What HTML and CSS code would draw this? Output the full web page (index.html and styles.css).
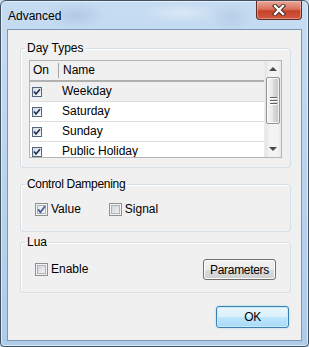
FILE: index.html
```html
<!DOCTYPE html>
<html lang="en">
<head>
    <meta charset="UTF-8">
    <title>Advanced</title>
    <link rel="stylesheet" href="styles.css">
</head>
<body>
    <div class="window">
        <div class="titlebar">
            <span class="title">Advanced</span>
            <button class="close" title="Close">
                <svg width="14" height="12" viewBox="0 0 14 12">
                    <path d="M3 2 L11 10 M11 2 L3 10" stroke="#3a2420" stroke-width="4.2" stroke-linecap="square"/>
                    <path d="M3 2 L11 10 M11 2 L3 10" stroke="#fff" stroke-width="2.4" stroke-linecap="square"/>
                </svg>
            </button>
        </div>

        <div class="client">
            <fieldset class="group group-days">
                <legend>Day Types</legend>
                <div class="group-body">
                    <div class="list">
                        <div class="grid">
                            <div class="grid-head">
                                <div class="col-on">On</div>
                                <div class="col-name">Name</div>
                            </div>
                            <div class="row current">
                                <span class="cell-on"><span class="tick"><svg width="8" height="8" viewBox="0 0 8 8"><path d="M1 3.5 L3 6 L7 1.2" fill="none" stroke="#1d3050" stroke-width="1.6"/></svg></span></span>
                                <span class="cell-name">Weekday</span>
                            </div>
                            <div class="row">
                                <span class="cell-on"><span class="tick"><svg width="8" height="8" viewBox="0 0 8 8"><path d="M1 3.5 L3 6 L7 1.2" fill="none" stroke="#1d3050" stroke-width="1.6"/></svg></span></span>
                                <span class="cell-name">Saturday</span>
                            </div>
                            <div class="row">
                                <span class="cell-on"><span class="tick"><svg width="8" height="8" viewBox="0 0 8 8"><path d="M1 3.5 L3 6 L7 1.2" fill="none" stroke="#1d3050" stroke-width="1.6"/></svg></span></span>
                                <span class="cell-name">Sunday</span>
                            </div>
                            <div class="row">
                                <span class="cell-on"><span class="tick"><svg width="8" height="8" viewBox="0 0 8 8"><path d="M1 3.5 L3 6 L7 1.2" fill="none" stroke="#1d3050" stroke-width="1.6"/></svg></span></span>
                                <span class="cell-name">Public Holiday</span>
                            </div>
                        </div>
                        <div class="vscroll">
                            <div class="sb-btn"><span class="arrow-up"></span></div>
                            <div class="sb-track">
                                <div class="sb-thumb">
                                    <span class="grip"></span>
                                    <span class="grip"></span>
                                    <span class="grip"></span>
                                </div>
                            </div>
                            <div class="sb-btn"><span class="arrow-down"></span></div>
                        </div>
                    </div>
                </div>
            </fieldset>

            <fieldset class="group group-damp">
                <legend>Control Dampening</legend>
                <div class="group-body check-row">
                    <label class="check">
                        <span class="cb checked"><svg width="11" height="11" viewBox="0 0 11 11"><path d="M2.2 5.4 L4.4 8.2 L9 2.2" fill="none" stroke="#4a5c9c" stroke-width="1.8"/></svg></span>
                        Value
                    </label>
                    <label class="check">
                        <span class="cb"></span>
                        Signal
                    </label>
                </div>
            </fieldset>

            <fieldset class="group group-lua">
                <legend>Lua</legend>
                <div class="group-body lua-row">
                    <label class="check">
                        <span class="cb"></span>
                        Enable
                    </label>
                    <button class="btn">Parameters</button>
                </div>
            </fieldset>

            <div class="actions">
                <button class="btn btn-default">OK</button>
            </div>
        </div>
    </div>
</body>
</html>
```

FILE: styles.css
```css
* {
    margin: 0;
    padding: 0;
    box-sizing: border-box;
}

body {
    font-family: "Liberation Sans", Arial, sans-serif;
    font-size: 12px;
    color: #000;
    background: #c8dcf0;
}

.window {
    display: flex;
    flex-direction: column;
    width: 309px;
    height: 347px;
    padding: 0 6px 5px 6px;
    border: 1px solid #43525f;
    border-radius: 6px 6px 4px 4px;
    background:
        radial-gradient(ellipse 30px 14px at 75px 14px, rgba(120, 150, 185, .25), transparent),
        radial-gradient(ellipse 40px 10px at 180px 12px, rgba(255, 255, 255, .35), transparent),
        radial-gradient(ellipse 22px 16px at 230px 16px, rgba(130, 160, 190, .2), transparent),
        linear-gradient(#c6dcf2, #b8d2ec 60%, #aecbea);
    box-shadow: inset 0 0 0 1px rgba(255, 255, 255, .55);
}

/* title bar */

.titlebar {
    display: flex;
    justify-content: space-between;
    align-items: flex-start;
    height: 28px;
    margin: 0 -6px;
    padding: 0 6px 0 7px;
}

.title {
    padding-top: 8px;
    line-height: 14px;
}

.close {
    display: flex;
    align-items: center;
    justify-content: center;
    width: 46px;
    height: 19px;
    border: 1px solid #5e2c24;
    border-top: 0;
    border-radius: 0 0 4px 4px;
    background: linear-gradient(#e9a899, #d9735f 45%, #c7432b 55%, #d2583e);
    box-shadow: inset 0 0 0 1px rgba(255, 210, 200, .45);
}

/* client area */

.client {
    flex: 1;
    display: flex;
    flex-direction: column;
    padding: 11px 10px 0 12px;
    border: 1px solid #7f97b1;
    background: #f0f0f0;
}

.group {
    padding: 0;
    border: 1px solid #d5dfe5;
    border-radius: 3px;
    box-shadow: inset 1px 1px 0 #fff;
}

.group legend {
    margin-left: 4px;
    padding: 0 2px;
    line-height: 14px;
}

.group-damp legend {
    letter-spacing: -0.3px;
}

.group-days .group-body {
    padding: 5px 8px 9px;
}

.group-damp {
    margin-top: 9px;
}

.group-damp .group-body {
    padding: 12px 14px 15px;
}

.group-lua {
    margin-top: 3px;
}

.group-lua .group-body {
    padding: 10px 14px 12px;
}

/* list */

.list {
    display: flex;
    height: 98px;
    border: 1px solid #b5b5b5;
    background: #fff;
    overflow: hidden;
}

.grid {
    flex: 1;
}

.grid-head {
    display: flex;
    height: 21px;
    border-bottom: 2px solid #b0b0b0;
    background: #f0f0f0;
    line-height: 19px;
}

.col-on {
    width: 29px;
    margin: 2px 0;
    padding-left: 3px;
    border-right: 1px solid #a5a5a5;
    line-height: 15px;
}

.col-name {
    padding-left: 4px;
}

.row {
    display: flex;
    align-items: center;
    height: 20px;
    border-bottom: 1px solid #dedede;
    line-height: 19px;
}

.row.current {
    background: #f0f0f0;
}

.cell-on {
    display: flex;
    width: 29px;
    padding: 1px 0 0 2px;
}

.cell-name {
    padding-left: 3px;
}

.tick {
    display: flex;
    align-items: center;
    justify-content: center;
    width: 10px;
    height: 10px;
    border: 1px solid #54667e;
    background: linear-gradient(135deg, #d6dce4, #fafafa);
}

/* scrollbar */

.vscroll {
    display: flex;
    flex-direction: column;
    width: 17px;
    background: linear-gradient(to right, #e4e4e4, #f3f3f3 30%, #f3f3f3 80%, #e8e8e8);
    border-left: 1px solid #ececec;
}

.sb-btn {
    display: flex;
    align-items: center;
    justify-content: center;
    height: 16px;
}

.arrow-up,
.arrow-down {
    width: 0;
    height: 0;
    border-left: 4px solid transparent;
    border-right: 4px solid transparent;
}

.arrow-up {
    border-bottom: 4px solid #4a4a4a;
}

.arrow-down {
    border-top: 4px solid #4a4a4a;
}

.sb-track {
    flex: 1;
    padding: 0 1px;
}

.sb-thumb {
    display: flex;
    flex-direction: column;
    align-items: center;
    justify-content: center;
    gap: 1px;
    height: 47px;
    border: 1px solid #959595;
    border-radius: 2px;
    background: linear-gradient(to right, #f5f5f5, #eaeaea 45%, #d9d9d9 55%, #c6c6c6);
    box-shadow: inset 0 0 0 1px rgba(255, 255, 255, .7);
}

.grip {
    width: 7px;
    height: 2px;
    border-top: 1px solid #606060;
    border-bottom: 1px solid #fff;
}

/* checkboxes */

.check-row,
.lua-row {
    display: flex;
    align-items: center;
}

.check-row {
    gap: 28px;
}

.lua-row {
    justify-content: space-between;
}

.check {
    display: flex;
    align-items: center;
    gap: 3px;
    line-height: 13px;
}

.cb {
    display: flex;
    align-items: center;
    justify-content: center;
    width: 13px;
    height: 13px;
    border: 1px solid #8f8f8f;
    background: linear-gradient(135deg, #ccd0d6, #f7f7f7);
    box-shadow: inset 0 0 0 1px #f4f4f4, inset 0 0 0 2px #aeb3b9;
}

.cb.checked {
    background: linear-gradient(135deg, #dfe6ee, #fbfbfb);
}

/* buttons */

.btn {
    width: 73px;
    height: 21px;
    border: 1px solid #707070;
    border-radius: 3px;
    font: inherit;
    letter-spacing: -0.3px;
    color: #000;
    background: linear-gradient(#f2f2f2, #ebebeb 50%, #dddddd 50%, #cfcfcf);
    box-shadow: inset 0 0 0 1px #fbfbfb;
}

.actions {
    display: flex;
    justify-content: flex-end;
    margin-top: 13px;
    padding-right: 2px;
}

.btn-default {
    height: 22px;
    border-color: #3c7fb1;
    background: linear-gradient(#eaf6fd, #d9f0fc 50%, #bee6fd 50%, #a7d9f5);
    box-shadow: inset 0 0 0 1px #c8ebfb, 0 0 2px #8fd0f5;
}
```
